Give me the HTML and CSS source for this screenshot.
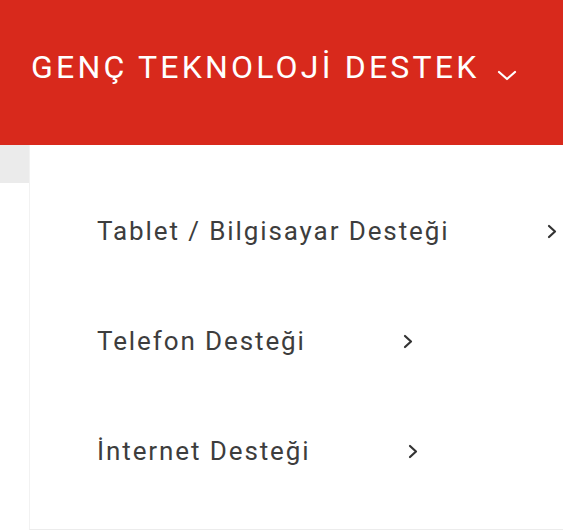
FILE: index.html
```html
<html>
  <head>
    <meta charset="utf-8">
    <link rel="stylesheet" href="styles.css">
  </head>
  <body>
    <div class="topbar">
      <span class="topbar-title">GENÇ TEKNOLOJİ DESTEK</span>
      <svg class="topbar-caret" viewBox="0 0 20 11" fill="none" stroke="currentColor" stroke-width="2.2" stroke-linecap="round" stroke-linejoin="round">
        <path d="M2 2l8 7 8-7" />
      </svg>
    </div>
    <div class="below">
      <div class="side-strip"></div>
      <div class="dropdown">
        <ul class="menu">
          <li class="menu-item">
            <span>Tablet / Bilgisayar Desteği</span>
            <svg class="menu-arrow" viewBox="0 0 10 15" fill="none" stroke="currentColor" stroke-width="2.2" stroke-linecap="round" stroke-linejoin="round">
              <path d="M2 2l6 5.5-6 5.5" />
            </svg>
          </li>
          <li class="menu-item">
            <span>Telefon Desteği</span>
            <svg class="menu-arrow" viewBox="0 0 10 15" fill="none" stroke="currentColor" stroke-width="2.2" stroke-linecap="round" stroke-linejoin="round">
              <path d="M2 2l6 5.5-6 5.5" />
            </svg>
          </li>
          <li class="menu-item">
            <span>İnternet Desteği</span>
            <svg class="menu-arrow" viewBox="0 0 10 15" fill="none" stroke="currentColor" stroke-width="2.2" stroke-linecap="round" stroke-linejoin="round">
              <path d="M2 2l6 5.5-6 5.5" />
            </svg>
          </li>
        </ul>
      </div>
    </div>
  </body>
</html>
```

FILE: styles.css
```css
html {
  height: 100%;
}
body {
  margin: 0;
  padding: 0;
  font-family: Roboto, "Liberation Sans", sans-serif;
  background-color: #fff;
  overflow: hidden;
}
.topbar {
  height: 145px;
  box-sizing: border-box;
  padding: 43px 0 0 31px;
  background-color: #d8291c;
  color: #fff;
  display: flex;
  align-items: flex-start;
  white-space: nowrap;
}
.topbar-title {
  font-size: 32px;
  line-height: 48px;
  letter-spacing: 3.2px;
}
.topbar-caret {
  width: 20px;
  height: 11px;
  margin: 27px 0 0 18px;
}
.below {
  display: flex;
  align-items: flex-start;
}
.side-strip {
  width: 29px;
  height: 38px;
  background-color: #ebebeb;
  flex-shrink: 0;
}
.dropdown {
  flex: 1;
  height: 385px;
  box-sizing: border-box;
  border-left: 1px solid #f2f2f2;
  border-bottom: 1px solid #ececec;
  background-color: #fff;
}
.menu {
  list-style: none;
  margin: 0;
  padding: 31px 0 0 67px;
}
.menu-item {
  height: 110px;
  display: flex;
  align-items: center;
  white-space: nowrap;
  font-size: 26px;
  letter-spacing: 1.9px;
  color: #3d3d3d;
}
.menu-arrow {
  width: 10px;
  height: 15px;
  margin-left: 97px;
  color: #333;
}
```
